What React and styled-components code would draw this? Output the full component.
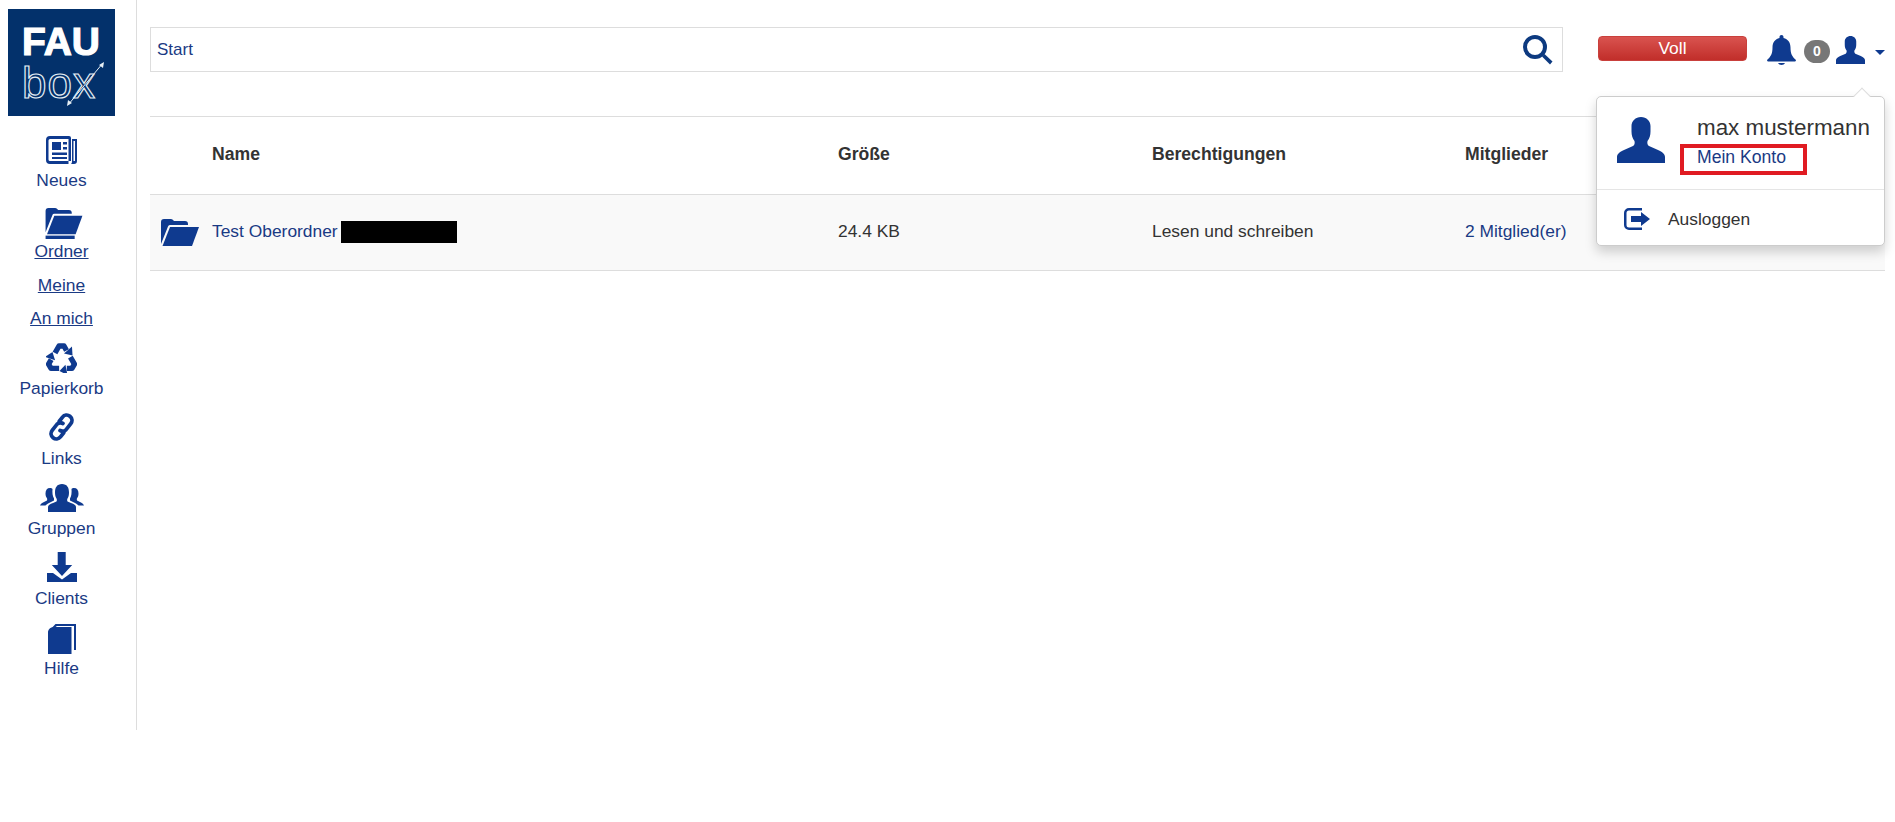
import React from "react";
import styled, { createGlobalStyle } from "styled-components";

const blue = "#0f3a8f";
const linkBlue = "#1a3a84";

const GlobalStyle = createGlobalStyle`
  html, body {
    margin: 0;
    padding: 0;
    background: #fff;
    overflow: hidden;
  }
  body {
    font-family: "Liberation Sans", Arial, sans-serif;
    font-size: 17.4px;
    color: #333;
  }
  *, *::before, *::after {
    box-sizing: border-box;
  }
`;

const Page = styled.div`
  display: flex;
  width: 1895px;
  height: 822px;
  align-items: flex-start;
`;

const Sidebar = styled.nav`
  width: 137px;
  height: 730px;
  flex: none;
  padding: 9px 0 0 8px;
  border-right: 1px solid #ddd;
  display: flex;
  flex-direction: column;
`;

const Logo = styled.div`
  position: relative;
  width: 107px;
  height: 107px;
  margin-bottom: 14px;
  background: #03316b;
  color: #fff;
  overflow: hidden;
  display: flex;
  flex-direction: column;
  padding: 13px 0 0 14px;
`;

const LogoFau = styled.span`
  font-size: 39px;
  line-height: 40px;
  height: 36px;
  font-weight: 700;
  -webkit-text-stroke: 1.2px #fff;
`;

const LogoBox = styled.span`
  margin-top: 3px;
  font-size: 44px;
  line-height: 44px;
  letter-spacing: 1px;
  color: transparent;
  -webkit-text-stroke: 1.2px #e6eff5;
`;

const LogoArrow = styled.svg`
  position: absolute;
  left: 0;
  top: 0;
`;

const NavItem = styled.a`
  height: ${(p) => p.$h}px;
  margin-left: -8px;
  width: 123px;
  display: flex;
  flex-direction: column;
  align-items: center;
  gap: ${(p) => p.$gap}px;
  color: ${linkBlue};
  line-height: 24px;
  svg {
    display: block;
    flex: none;
    fill: ${blue};
  }
  span {
    text-decoration: ${(p) => (p.$underline ? "underline" : "none")};
  }
`;

const IconSlot = styled.div`
  height: ${(p) => p.$h}px;
  padding-left: ${(p) => p.$shift || 0}px;
  display: flex;
  align-items: flex-end;
`;

const Content = styled.main`
  position: relative;
  flex: 1;
  min-width: 0;
  padding: 27px 10px 0 13px;
`;

const TopBar = styled.header`
  display: flex;
  align-items: flex-start;
  height: 89px;
`;

const SearchBox = styled.div`
  width: 1413px;
  height: 45px;
  border: 1px solid #ddd;
  padding: 0 9px 0 6px;
  display: flex;
  align-items: center;
  justify-content: space-between;
  color: ${linkBlue};
  font-size: 17px;
`;

const QuotaButton = styled.button`
  width: 149px;
  height: 25px;
  margin: 9px 0 0 35px;
  padding: 0 0 1px;
  border: 1px solid #c9403c;
  border-radius: 4px;
  background: linear-gradient(to bottom, #d9534f, #c12e2a);
  color: #fff;
  font: inherit;
  line-height: 20px;
`;

const UserTools = styled.div`
  display: flex;
  align-items: center;
  margin: 8px 0 0 20px;
  height: 30px;
  svg {
    display: block;
    fill: ${blue};
  }
`;

const Badge = styled.span`
  width: 26px;
  height: 23px;
  margin: 2px 6px 0 8px;
  border-radius: 12px;
  background: #777;
  color: #fff;
  font-size: 14px;
  font-weight: 700;
  display: flex;
  align-items: center;
  justify-content: center;
`;

const Caret = styled.span`
  width: 0;
  height: 0;
  margin: 4px 0 0 10px;
  border-left: 5px solid transparent;
  border-right: 5px solid transparent;
  border-top: 5px solid ${blue};
`;

const Row = styled.div`
  display: grid;
  grid-template-columns: 62px 626px 314px 313px 1fr;
  align-items: center;
  border-bottom: 1px solid #ddd;
  height: ${(p) => p.$h}px;
  background: ${(p) => p.$bg || "#fff"};
  padding-bottom: 2px;
`;

const HeadRow = styled(Row)`
  border-top: 1px solid #ddd;
  font-weight: 700;
  font-size: 17.6px;
`;

const FolderCell = styled.div`
  padding: 1px 0 0 11px;
  svg {
    display: block;
    fill: ${blue};
  }
`;

const NameLink = styled.a`
  color: ${linkBlue};
  display: flex;
  align-items: center;
`;

const Redacted = styled.span`
  width: 116px;
  height: 22px;
  margin-left: 3px;
  background: #000;
`;

const MemberLink = styled.a`
  color: ${linkBlue};
`;

const Dropdown = styled.div`
  position: absolute;
  left: 1459px;
  top: 96px;
  width: 289px;
  height: 150px;
  background: #fff;
  border: 1px solid #ccc;
  border-radius: 5px;
  box-shadow: 0 6px 12px rgba(0, 0, 0, 0.175);
  display: flex;
  flex-direction: column;
  &::before {
    content: "";
    position: absolute;
    right: 16px;
    top: -7px;
    width: 12px;
    height: 12px;
    background: #fff;
    border-left: 1px solid #ddd;
    border-top: 1px solid #ddd;
    transform: rotate(45deg);
  }
`;

const ProfileRow = styled.div`
  height: 93px;
  flex: none;
  border-bottom: 1px solid #e5e5e5;
  display: flex;
  padding: 20px 0 0 20px;
  svg {
    display: block;
    fill: ${blue};
  }
`;

const ProfileText = styled.div`
  margin-left: 32px;
  margin-top: -2px;
`;

const ProfileName = styled.div`
  font-size: 22.4px;
  line-height: 26px;
  white-space: nowrap;
  color: #333;
`;

const AccountLink = styled.a`
  position: relative;
  display: block;
  margin-top: 5px;
  font-size: 17.6px;
  line-height: 22px;
  color: ${linkBlue};
  &::after {
    content: "";
    position: absolute;
    left: -17px;
    top: -2px;
    width: 127px;
    height: 31px;
    border: 4px solid #e01b22;
  }
`;

const LogoutRow = styled.a`
  flex: 1;
  display: flex;
  align-items: center;
  padding: 3px 0 0 27px;
  color: #333;
  svg {
    display: block;
    margin-right: 18px;
    fill: ${blue};
  }
`;

const Newspaper = () => (
  <svg width="31" height="28" viewBox="0 0 31 28">
    <path fillRule="evenodd" d="M4 0h19a2 2 0 0 1 2 2v23h-2.500V3H4a1.500 1.500 0 0 0-1.500 1.500v19A1.500 1.500 0 0 0 4 25h18.500v3H4a4 4 0 0 1-4-4V4a4 4 0 0 1 4-4z" />
    <path d="M6 6h9v8H6zM17 6h4v2.500h-4zM17 11h4v2.500h-4zM6 16.500h15V19H6zM6 21h15v2H6z" />
    <path d="M26 3h5v22a3 3 0 0 1-3 3h-3c1-1 1-2 1-3zM27.500 5v20h1.500V5z" fillRule="evenodd" />
  </svg>
);

const FolderOpen = ({ bar, w = 38, h = 32 }) => (
  <svg width={w} height={h} viewBox={bar ? "0 0 38 33" : "0 0 38 28"}>
    <path d="M0 26V4a3 3 0 0 1 3-3h7a3 3 0 0 1 2.500 1.500L13 3h11a3 3 0 0 1 3 3v1H9a2 2 0 0 0-2 1.500z" />
    <path d="M9 9h29l-7 19H1.500z" />
    {bar && <path d="M0 29.500h30V33H0z" />}
  </svg>
);

// three chasing arrows, one arm turned around the middle
const Recycle = () => (
  <svg width="31" height="30" viewBox="-15.500 -16.500 31 30">
    {[0, 120, 240].map((a) => (
      <g key={a} transform={`rotate(${a})`}>
        <path d="M-6.500-6.500L-2.500-13.500H2.500L5-9" fill="none" stroke={blue} strokeWidth="5.400" strokeLinejoin="round" />
        <path d="M10.500-13L11-4 2.500-6z" />
      </g>
    ))}
  </svg>
);

const LinkIcon = () => (
  <svg width="25" height="28" viewBox="-12.500 -14 25 28">
    <g transform="rotate(-52) scale(1.050)" fill="none" stroke={blue} strokeWidth="3.600" strokeLinecap="round">
      <path d="M3.500-1a5 5 0 0 0-4-4H-8a5 5 0 0 0 0 10H-3" />
      <path d="M-3.500 1a5 5 0 0 0 4 4H8a5 5 0 0 0 0-10H3" />
    </g>
  </svg>
);

const Group = () => (
  <svg width="44" height="28" viewBox="0 0 44 28">
    <path d="M8 28V23c0-2 2-3 5-4l3.500-1.500c.5-1 .5-2 0-3-1-1.500-1.500-3.500-1.500-6C15 3.500 17 0 22 0s7 3.500 7 8.500c0 2.500-.5 4.500-1.500 6-.5 1-.5 2 0 3L31 19c3 1 5 2 5 4v5z" />
    <path d="M0 21.500c.5-1.500 2-2.500 4-3.500l3-1.500c.3-.8.3-1.500 0-2.200C6 13 5.500 11.500 5.500 9.500 5.500 6 7 4 10 4c1 0 2 .3 2.500 1-.3 3.500 0 7 1.500 9.500v2l-5 2.500c-2 1-3 2-3.500 2.500z" />
    <path d="M44 21.500c-.5-1.500-2-2.500-4-3.500l-3-1.500c-.3-.8-.3-1.500 0-2.200 1-1.300 1.500-2.800 1.500-4.800C38.500 6 37 4 34 4c-1 0-2 .3-2.500 1 .3 3.500 0 7-1.500 9.500v2l5 2.500c2 1 3 2 3.500 2.500z" />
  </svg>
);

const Download = () => (
  <svg width="30" height="30" viewBox="0 0 30 30">
    <path d="M10.700 0h8v13h6.500L15 24 4.800 13h5.900z" />
    <path d="M0 21h6l9 6.500L24 21h6v9H0z" />
  </svg>
);

const Book = () => (
  <svg width="28" height="30" viewBox="0 0 28 30">
    <path d="M7.500 0H28v26h-2V2H9L0 8z" />
    <path d="M0 8c0-2 2-5 6-5h17.500v27H0z" />
  </svg>
);

const Search = () => (
  <svg width="30" height="30" viewBox="0 0 30 30">
    <circle cx="12" cy="12" r="10" fill="none" stroke="#0d3a80" strokeWidth="4" />
    <path d="M19 21.500L21.500 19 29.500 26.500 27 29.500z" fill="#0d3a80" />
  </svg>
);

const Bell = () => (
  <svg width="29" height="30" viewBox="0 0 29 30">
    <path d="M14.500 0c1.200 0 2 .8 2 2v1c4.500 1 7 4.500 7 9.500 0 6 1.500 9 5.500 12.500 0 .8-.5 1.500-1.500 1.500H1.500C.5 26.500 0 25.800 0 25c4-3.500 5.500-6.500 5.500-12.500 0-5 2.500-8.500 7-9.500V2c0-1.200.8-2 2-2z" />
    <path d="M11 28h7c-.5 1.300-2 2-3.500 2S11.500 29.300 11 28z" />
  </svg>
);

const User = ({ w, h }) => (
  <svg width={w} height={h} viewBox="0 0 48 46">
    <path d="M0 46v-6c0-3 2.500-5 7-7l9-4c1.500-1 2-2.500 1.500-5-2-2.500-3-5.500-3-9.500V9c0-5 4-9 9.500-9S33.500 4 33.500 9v5.500c0 4-1 7-3 9.500-.5 2.500 0 4 1.500 5l9 4c4.500 2 7 4 7 7v6z" />
  </svg>
);

const Logout = () => (
  <svg width="26" height="22" viewBox="0 0 26 22">
    <path d="M5 0h13v2.500H5A2.500 2.500 0 0 0 2.500 5v12A2.500 2.500 0 0 0 5 19.500h13V22H5a5 5 0 0 1-5-5V5a5 5 0 0 1 5-5z" />
    <path d="M7 8h10V4l9 7-9 7v-4H7z" />
  </svg>
);

const navItems = [
  { label: "Neues", icon: <Newspaper />, slot: 34, h: 77, gap: 4 },
  { label: "Ordner", icon: <FolderOpen bar />, slot: 32, h: 66, gap: 0, shift: 5, underline: true },
  { label: "Meine", h: 33, gap: 0, underline: true },
  { label: "An mich", h: 37, gap: 0, underline: true },
  { label: "Papierkorb", icon: <Recycle />, slot: 30, h: 70, gap: 3 },
  { label: "Links", icon: <LinkIcon />, slot: 28, h: 71, gap: 5 },
  { label: "Gruppen", icon: <Group />, slot: 28, h: 68, gap: 4 },
  { label: "Clients", icon: <Download />, slot: 30, h: 72, gap: 4 },
  { label: "Hilfe", icon: <Book />, slot: 30, h: 60, gap: 2 },
];

export default function App() {
  return (
    <Page>
      <GlobalStyle />
      <Sidebar>
        <Logo>
          <LogoFau>FAU</LogoFau>
          <LogoBox>box</LogoBox>
          <LogoArrow width="107" height="107" viewBox="0 0 107 107">
            <path d="M60 96L95 54" stroke="#e6eff5" strokeWidth="1" fill="none" />
            <path d="M96 53l-1 6-4-3zM59 97l1-6 4 3z" fill="#e6eff5" />
          </LogoArrow>
        </Logo>
        {navItems.map((item) => (
          <NavItem key={item.label} $h={item.h} $gap={item.gap} $underline={item.underline}>
            {item.icon && (
              <IconSlot $h={item.slot} $shift={item.shift}>
                {item.icon}
              </IconSlot>
            )}
            <span>{item.label}</span>
          </NavItem>
        ))}
      </Sidebar>
      <Content>
        <TopBar>
          <SearchBox>
            Start
            <Search />
          </SearchBox>
          <QuotaButton>Voll</QuotaButton>
          <UserTools>
            <Bell />
            <Badge>0</Badge>
            <User w={29} h={28} />
            <Caret />
          </UserTools>
        </TopBar>
        <HeadRow $h={79}>
          <div />
          <div>Name</div>
          <div>Größe</div>
          <div>Berechtigungen</div>
          <div>Mitglieder</div>
        </HeadRow>
        <Row $h={76} $bg="#f9f9f9">
          <FolderCell>
            <FolderOpen w={38} h={28} />
          </FolderCell>
          <NameLink>
            Test Oberordner
            <Redacted />
          </NameLink>
          <div>24.4 KB</div>
          <div>Lesen und schreiben</div>
          <MemberLink>2 Mitglied(er)</MemberLink>
        </Row>
        <Dropdown>
          <ProfileRow>
            <User w={48} h={46} />
            <ProfileText>
              <ProfileName>max mustermann</ProfileName>
              <AccountLink>Mein Konto</AccountLink>
            </ProfileText>
          </ProfileRow>
          <LogoutRow>
            <Logout />
            Ausloggen
          </LogoutRow>
        </Dropdown>
      </Content>
    </Page>
  );
}
